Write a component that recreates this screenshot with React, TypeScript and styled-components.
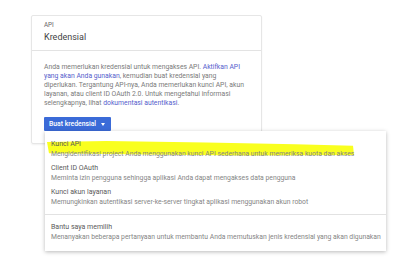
import styled, { createGlobalStyle } from "styled-components";

const GlobalStyle = createGlobalStyle`
  html, body {
    margin: 0;
    padding: 0;
    background: #ffffff;
    font-family: Roboto, "Liberation Sans", Arial, sans-serif;
  }
`;

const items = [
  {
    title: "Kunci API",
    desc: "Mengidentifikasi project Anda menggunakan kunci API sederhana untuk memeriksa kuota dan akses",
  },
  {
    title: "Client ID OAuth",
    desc: "Meminta izin pengguna sehingga aplikasi Anda dapat mengakses data pengguna",
  },
  {
    title: "Kunci akun layanan",
    desc: "Memungkinkan autentikasi server-ke-server tingkat aplikasi menggunakan akun robot",
  },
];

const App = () => {
  return (
    <Page>
      <GlobalStyle />
      <Card>
        <CardHeader>
          <Eyebrow>API</Eyebrow>
          <Title>Kredensial</Title>
        </CardHeader>
        <CardBody>
          <Intro>
            Anda memerlukan kredensial untuk mengakses API. <Link>Aktifkan API yang akan Anda gunakan</Link>,
            kemudian buat kredensial yang diperlukan. Tergantung API-nya, Anda memerlukan kunci API, akun
            layanan, atau client ID OAuth 2.0. Untuk mengetahui informasi selengkapnya, lihat{" "}
            <Link>dokumentasi autentikasi</Link>.
          </Intro>
          <MenuAnchor>
            <CreateButton>
              Buat kredensial
              <Caret />
            </CreateButton>
            <Menu>
              {/* highlighter stroke drawn over the first option */}
              <Highlight viewBox="0 0 310 16" preserveAspectRatio="none">
                <path d="M0 1 L60 0 L160 1.5 L250 3.5 L308 5 L309 15 L200 15.5 L100 14.5 L2 13 Z" fill="#f9ff1f" />
              </Highlight>
              <MenuGroup>
                {items.map((it) => (
                  <MenuItem key={it.title}>
                    <ItemTitle>{it.title}</ItemTitle>
                    <ItemDesc>{it.desc}</ItemDesc>
                  </MenuItem>
                ))}
              </MenuGroup>
              <MenuGroup $divided>
                <MenuItem>
                  <ItemTitle>Bantu saya memilih</ItemTitle>
                  <ItemDesc>
                    Menanyakan beberapa pertanyaan untuk membantu Anda memutuskan jenis kredensial yang akan
                    digunakan
                  </ItemDesc>
                </MenuItem>
              </MenuGroup>
            </Menu>
          </MenuAnchor>
        </CardBody>
      </Card>
    </Page>
  );
};

const Page = styled.div`
  width: 400px;
  height: 266px;
  padding: 15px 0 0 31px;
  box-sizing: border-box;
  overflow: hidden;
`;

const Card = styled.div`
  width: 231px;
  border: 1px solid #e6e6e6;
  border-radius: 2px;
  box-shadow: 0 1px 2px rgba(0, 0, 0, 0.06);
  box-sizing: border-box;
`;

const CardHeader = styled.div`
  padding: 5px 12px 7px;
  border-bottom: 1px solid #e3e3e3;
`;

const Eyebrow = styled.div`
  font-size: 6.3px;
  line-height: 8px;
  color: #666;
`;

const Title = styled.div`
  font-size: 9px;
  line-height: 12px;
  color: #444;
  margin-top: 2px;
`;

const CardBody = styled.div`
  padding: 12px 12px 12px;
`;

const Intro = styled.p`
  margin: 0;
  font-size: 6.8px;
  line-height: 9px;
  color: #7a7a7a;
`;

const Link = styled.span`
  color: #5560cc;
`;

const MenuAnchor = styled.div`
  position: relative;
  margin-top: 9px;
`;

const CreateButton = styled.button`
  display: flex;
  align-items: center;
  gap: 5px;
  height: 14px;
  padding: 0 6px 0 5px;
  border: none;
  border-radius: 1px;
  background: #3b6bd8;
  color: #ffffff;
  font-family: Roboto, "Liberation Sans", Arial, sans-serif;
  font-size: 6.8px;
  font-weight: 500;
`;

const Caret = styled.span`
  width: 0;
  height: 0;
  border-left: 2.5px solid transparent;
  border-right: 2.5px solid transparent;
  border-top: 3px solid #ffffff;
`;

const Menu = styled.div`
  position: absolute;
  top: 14px;
  left: 1px;
  width: 341px;
  background: #ffffff;
  box-shadow: 0 1px 4px rgba(0, 0, 0, 0.28);
  z-index: 2;
`;

const Highlight = styled.svg`
  position: absolute;
  left: 2px;
  top: 10px;
  width: 308px;
  height: 15px;
  pointer-events: none;
`;

const MenuGroup = styled.div<{ $divided?: boolean }>`
  position: relative;
  display: flex;
  flex-direction: column;
  gap: 4px;
  padding: ${(p) => (p.$divided ? "7px 6px 9px" : "8px 6px 7px")};
  border-top: ${(p) => (p.$divided ? "1px solid #e2e2e2" : "none")};
`;

const MenuItem = styled.div`
  display: flex;
  flex-direction: column;
`;

const ItemTitle = styled.div`
  font-size: 7px;
  line-height: 10px;
  color: #5a5a5a;
`;

const ItemDesc = styled.div`
  font-size: 6.8px;
  line-height: 10px;
  color: #858585;
  white-space: nowrap;
`;

export default App;
